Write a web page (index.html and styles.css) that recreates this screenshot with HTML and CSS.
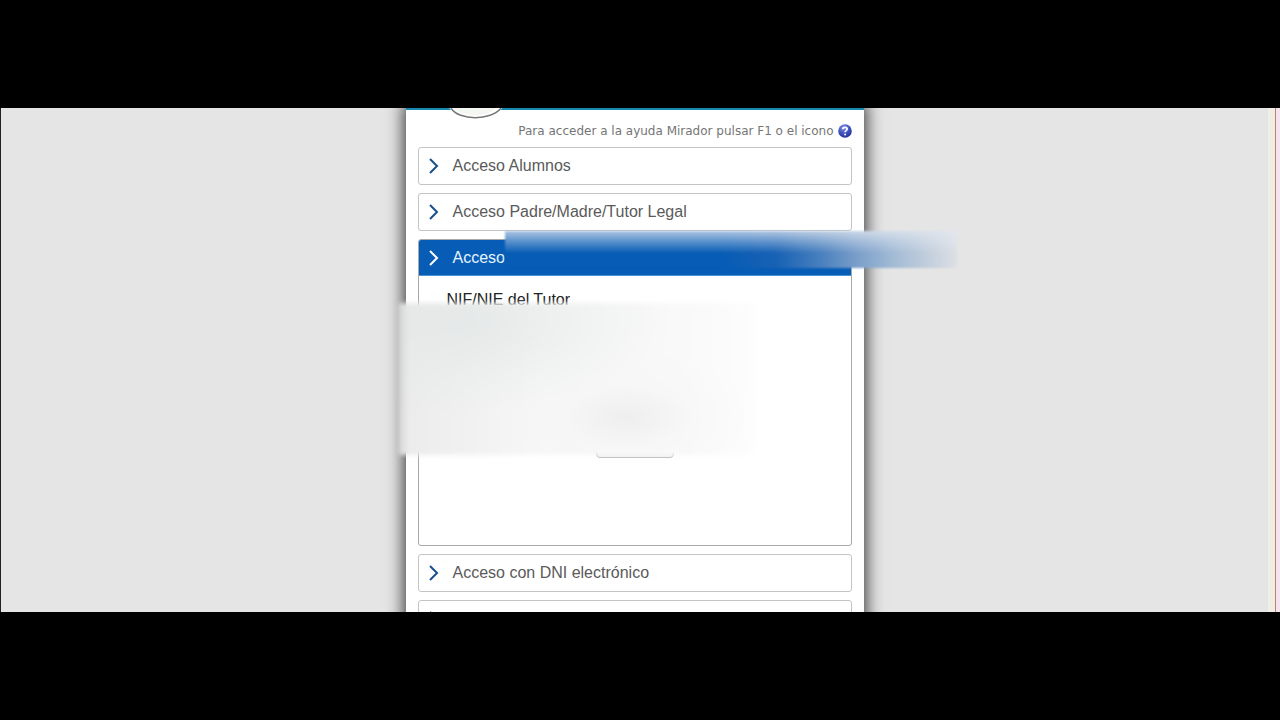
FILE: index.html
```html
<!DOCTYPE html>
<html lang="es">
<head>
<meta charset="utf-8">
<meta name="viewport" content="width=device-width, initial-scale=1">
<title>Acceso</title>
<link rel="stylesheet" href="styles.css">
</head>
<body>
<div class="stage">
  <main class="backdrop">
    <div class="panel">
      <svg class="emblem" width="60" height="12" viewBox="0 0 60 12" aria-hidden="true">
        <path d="M1-2C9 14 46 14 57-2Z" fill="#fff"/>
        <path d="M4 0C12 13 44 13 54 0" fill="none" stroke="#777" stroke-width="1.5"/>
        <path d="M6-1C14 10 41 10 50-1Z" fill="#f3f6f1"/>
      </svg>
      <p class="help">
        <span>Para acceder a la ayuda Mirador pulsar F1 o el icono</span>
        <button class="help-button" type="button" aria-label="Ayuda">
          <svg width="14" height="14" viewBox="0 0 14 14">
            <defs><radialGradient id="orb" cx=".4" cy=".25" r=".8"><stop offset="0" stop-color="#8292e4"/><stop offset=".55" stop-color="#3f51bd"/><stop offset="1" stop-color="#252e94"/></radialGradient></defs>
            <circle cx="7" cy="7" r="6.8" fill="url(#orb)"/>
            <path d="M4.8 5.2C4.8 2.6 9.3 2.7 9.2 5.1C9.2 6.6 7.1 6.6 7.1 8.3" fill="none" stroke="#fff" stroke-width="1.7"/>
            <circle cx="7.1" cy="10.5" r="1" fill="#fff"/>
          </svg>
        </button>
      </p>
      <div class="accordion">
        <section class="item">
          <button class="item-header" type="button"><svg class="chevron" width="10" height="16" viewBox="0 0 10 16"><path d="M1 1L8 8L1 15"/></svg>Acceso Alumnos</button>
        </section>
        <section class="item">
          <button class="item-header" type="button"><svg class="chevron" width="10" height="16" viewBox="0 0 10 16"><path d="M1 1L8 8L1 15"/></svg>Acceso Padre/Madre/Tutor Legal</button>
        </section>
        <section class="item open">
          <button class="item-header" type="button" aria-expanded="true"><svg class="chevron" width="10" height="16" viewBox="0 0 10 16"><path d="M1 1L8 8L1 15"/></svg>Acceso</button>
          <span class="smear-blue" aria-hidden="true"></span>
          <form class="item-body">
            <label for="nif">NIF/NIE del Tutor</label>
            <input class="field" id="nif" type="text">
            <button class="submit" type="button" aria-label="Entrar"></button>
            <span class="smear-gray" aria-hidden="true"></span>
          </form>
        </section>
        <section class="item">
          <button class="item-header" type="button"><svg class="chevron" width="10" height="16" viewBox="0 0 10 16"><path d="M1 1L8 8L1 15"/></svg>Acceso con DNI electrónico</button>
        </section>
        <section class="item">
          <button class="item-header" type="button" aria-label="Otro acceso"><svg class="chevron dark" width="10" height="16" viewBox="0 0 10 16"><path d="M1 1L8 8L1 15"/></svg></button>
        </section>
      </div>
    </div>
  </main>
  <div class="edge"></div>
</div>
</body>
</html>
```
FILE: styles.css
```css
* { box-sizing: border-box; }
body {
  margin: 0;
  height: 100vh;
  padding: 15vh 0;
  background: #000;
  font-family: "Liberation Sans", Arial, sans-serif;
  font-size: 16px;
  overflow: hidden;
}
button { font: inherit; cursor: pointer; }
.stage {
  display: flex;
  height: 100%;
  overflow: hidden;
  border-left: 1px solid #222;
  background: #e5e5e5;
}
.backdrop {
  flex: 1;
  display: flex;
  justify-content: center;
  align-items: flex-start;
}
.edge {
  width: 12px;
  background: linear-gradient(to right, #edefe8 0 2px, #f1ede4 2px 7px, #b9856f 7px 8px, #f5e3ee 8px);
}
.panel {
  position: relative;
  width: 458px;
  max-width: 100%;
  min-height: 520px;
  padding: 0 12px;
  border-top: 2px solid #158bb2;
  background: #fff;
  box-shadow: 0 -4px 16px 2px #333;
}
.emblem { position: absolute; left: 41px; top: -2px; }
.help {
  display: flex;
  justify-content: flex-end;
  align-items: center;
  gap: 4px;
  height: 37px;
  margin: 0;
  padding-top: 4px;
  color: #757575;
  font: 12px "DejaVu Sans", sans-serif;
}
.help-button { display: flex; padding: 0; border: 0; background: none; }
.accordion { display: flex; flex-direction: column; gap: 8px; }
.item {
  position: relative;
  border: 1px solid #c4c4c4;
  border-radius: 3px;
}
.item-header {
  display: flex;
  align-items: center;
  gap: 14px;
  width: 100%;
  height: 36px;
  padding: 0 10px;
  border: 0;
  background: none;
  color: #5a5a5a;
  text-align: left;
}
.chevron { fill: none; stroke: #17508b; stroke-width: 2; }
.chevron.dark { stroke: #333; }
.open { border-color: #a8a8a8; }
.open .item-header {
  background: #075cb5;
  color: #e6f4ff;
  border-radius: 2px 2px 0 0;
  border-bottom: 1px solid #4c93d4;
}
.open .chevron { stroke: #fff; }
.item-body {
  display: flex;
  flex-direction: column;
  align-items: flex-start;
  position: relative;
  height: 269px;
  padding: 15px 28px;
  color: #222;
}
.field { width: 180px; height: 28px; margin-top: 8px; border: 1px solid #ccc; }
.submit {
  align-self: center;
  width: 78px;
  height: 32px;
  margin-top: 81px;
  border: 1px solid #bbb;
  border-radius: 4px;
  background: #f1f1f1;
}
.smear-blue {
  position: absolute;
  left: 86px;
  top: -9px;
  width: 452px;
  height: 37px;
  z-index: 1;
  background:
    linear-gradient(to bottom, rgba(229, 233, 240, .75), rgba(229, 235, 243, .35) 30%, rgba(229, 237, 247, 0) 60%),
    linear-gradient(to right, #075cb5 0 48%, #1862b5 60%, #4a80be 70%, #7b9fca 78%, #a3bbd5 86%, #c8d2de 95%, #dde0e4);
  filter: blur(1px);
}
.smear-gray {
  position: absolute;
  left: -21px;
  top: 27px;
  width: 357px;
  height: 152px;
  background:
    linear-gradient(to right, rgba(205, 205, 205, .8), rgba(225, 225, 225, 0) 3%),
    radial-gradient(ellipse at 64% 75%, rgba(234, 234, 234, .7), rgba(244, 244, 244, .3) 20%, rgba(248, 248, 248, 0) 42%),
    radial-gradient(ellipse at 18% 12%, rgba(229, 232, 232, .9), rgba(240, 240, 240, 0) 50%),
    linear-gradient(to right, #ebebeb, #f7f7f7 40%, #f9f9f9 80%, #fdfdfd);
  filter: blur(2px);
}
```
